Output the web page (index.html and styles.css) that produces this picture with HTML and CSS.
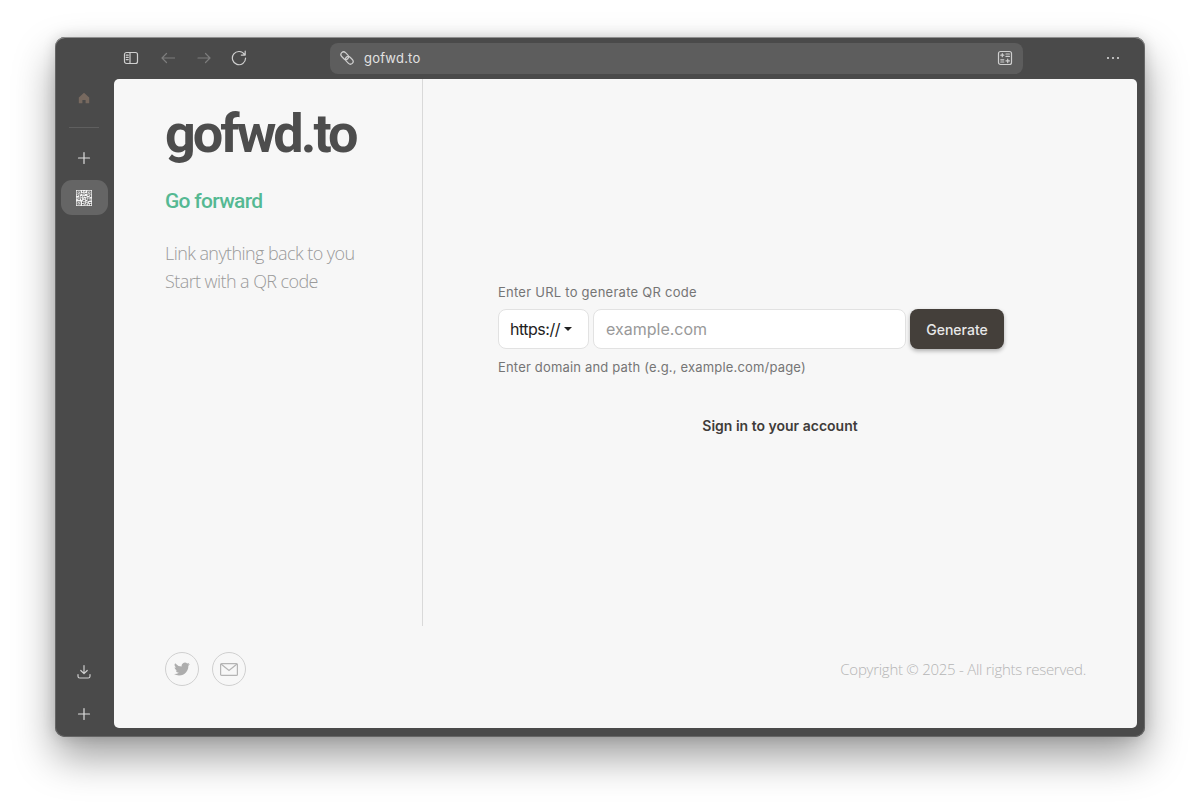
FILE: index.html
```html
<!DOCTYPE html>
<html lang="en">
<head>
    <meta charset="UTF-8">
    <meta name="viewport" content="width=device-width, initial-scale=1.0">
    <title>gofwd.to</title>
    <link rel="stylesheet" href="styles.css">
</head>
<body>
    <div class="window">
        <div class="toolbar">
            <div class="nav">
                <svg class="icon" width="16" height="16" viewBox="0 0 16 16"><rect x="1.5" y="2.5" width="13" height="11" rx="2"/><path d="M7 2.5v11M3.300 5.200h1.900M3.300 7.400h1.900M3.300 9.600h1.900"/></svg>
                <svg class="icon dim" width="16" height="16" viewBox="0 0 16 16"><path d="M15.500 8H3M7.500 3.500 3 8l4.500 4.500"/></svg>
                <svg class="icon dim" width="16" height="16" viewBox="0 0 16 16"><path d="M3 8h12M10.500 3.500 15 8l-4.500 4.500"/></svg>
                <svg class="icon" width="16" height="16" viewBox="0 0 16 16"><path d="M13.600 4.600A6.600 6.600 0 1 0 14.600 8M14.200 1.200v3.900h-3.900"/></svg>
            </div>
            <div class="address">
                <svg class="icon" width="16" height="16" viewBox="0 0 16 16"><g transform="rotate(45 8 8)"><rect x="0.500" y="5.300" width="8.500" height="5.400" rx="2.700"/><rect x="7" y="5.300" width="8.500" height="5.400" rx="2.700"/></g></svg>
                <span class="address-text">gofwd.to</span>
                <svg class="icon address-end" width="16" height="16" viewBox="0 0 16 16"><rect x="1.500" y="1.500" width="13" height="13" rx="2"/><path d="M3.800 5.200h3M5.300 3.700v3M9 4h3.400M9 6.400h3.400M3.800 9.800h3M3.800 12h3M9 10.900h3.400M10.700 9.200v3.400"/></svg>
            </div>
            <div class="more"><span></span><span></span><span></span></div>
        </div>
        <div class="main">
            <div class="sidebar">
                <svg class="home" width="12" height="12" viewBox="0 0 12 12"><path d="M6 .8.8 5.600v5.600h3.600V8h3.200v3.200h3.600V5.600z"/></svg>
                <div class="sidebar-line"></div>
                <svg class="icon plus" width="14" height="14" viewBox="0 0 14 14"><path d="M7 1.500v11M1.500 7h11"/></svg>
                <div class="tab">
                    <svg class="qr" width="16" height="16" viewBox="0 0 21 21">
                        <rect width="21" height="21" fill="#f4f4f4"/>
                        <path fill="#4a4a4a" d="M1 1h5v5H1zM15 1h5v5h-5zM1 15h5v5H1zM8 1h1v2H8zM10 2h2v1h-2zM12 1h1v1h-1zM7 4h2v1H7zM10 4h1v3h-1zM12 4h2v1h-2zM8 6h1v1H8zM1 7h2v1H1zM4 7h1v2H4zM6 8h2v1H6zM9 8h1v2H9zM11 8h3v1h-3zM15 7h2v1h-2zM18 7h2v2h-2zM1 10h1v2H1zM3 10h3v1H3zM7 10h1v3H7zM10 11h2v1h-2zM13 10h1v3h-1zM15 10h3v1h-3zM19 11h1v3h-1zM3 12h2v1H3zM9 13h3v1H9zM15 12h3v2h-3zM8 15h2v2H8zM11 15h1v3h-1zM13 15h3v1h-3zM17 16h3v1h-3zM13 17h2v1h-2zM16 18h1v2h-1zM18 18h2v2h-2zM8 18h2v2H8zM11 19h4v1h-4z"/>
                        <path fill="#f4f4f4" d="M2 2h3v3H2zM16 2h3v3h-3zM2 16h3v3H2z"/>
                        <path fill="#4a4a4a" d="M3 3h1v1H3zM17 3h1v1h-1zM3 17h1v1H3z"/>
                    </svg>
                </div>
                <div class="sidebar-bottom">
                    <svg class="icon" width="16" height="16" viewBox="0 0 16 16"><path d="M8 1.500v8M4.800 6.500 8 9.700l3.200-3.200M2 10.500v1.700A1.800 1.800 0 0 0 3.800 14h8.400a1.800 1.800 0 0 0 1.800-1.800v-1.700"/></svg>
                    <svg class="icon plus" width="14" height="14" viewBox="0 0 14 14"><path d="M7 1.500v11M1.500 7h11"/></svg>
                </div>
            </div>
            <div class="page">
                <div class="content">
                    <div class="intro">
                        <h1>gofwd.to</h1>
                        <h2>Go forward</h2>
                        <p>Link anything back to you<br>Start with a QR code</p>
                    </div>
                    <div class="panel">
                        <form class="qr-form">
                            <label for="url">Enter URL to generate QR code</label>
                            <div class="field-row">
                                <div class="protocol">https://<span class="caret"></span></div>
                                <input type="text" id="url" placeholder="example.com">
                                <button type="button">Generate</button>
                            </div>
                            <div class="hint">Enter domain and path (e.g., example.com/page)</div>
                        </form>
                        <a class="signin" href="#">Sign in to your account</a>
                    </div>
                </div>
                <div class="footer">
                    <div class="social">
                        <a class="social-link" href="#">
                            <svg width="16" height="16" viewBox="0 0 24 24"><path fill="#adadad" d="M23.600 4.600c-.9.400-1.800.600-2.800.800 1-.6 1.800-1.600 2.100-2.700-.9.600-2 1-3.100 1.200A4.900 4.900 0 0 0 11.500 8.300 13.900 13.900 0 0 1 1.700 3.200a4.900 4.900 0 0 0 1.500 6.600c-.8 0-1.600-.2-2.200-.6v.1c0 2.400 1.700 4.400 3.900 4.800-.7.200-1.500.2-2.200.1.600 2 2.400 3.400 4.600 3.400A9.900 9.900 0 0 1 0 19.600 13.900 13.900 0 0 0 7.500 21.800c9.100 0 14-7.500 14-14v-.6c1-.7 1.800-1.600 2.100-2.600z"/></svg>
                        </a>
                        <a class="social-link" href="#">
                            <svg width="18" height="13" viewBox="0 0 18 13" fill="none" stroke="#b4b4b4" stroke-width="1.200"><rect x=".6" y=".6" width="16.800" height="11.800" rx="1"/><path d="M1 1 9 7.500 17 1"/></svg>
                        </a>
                    </div>
                    <div class="copyright">Copyright © 2025 - All rights reserved.</div>
                </div>
            </div>
        </div>
    </div>
</body>
</html>
```

FILE: styles.css
```css
html, body {
    height: 100%;
}

body {
    margin: 0;
    padding: 37px 55px 0;
    box-sizing: border-box;
    background-color: #fff;
    overflow: hidden;
}

.window {
    height: 700px;
    display: flex;
    flex-direction: column;
    background-color: #4a4a4a;
    border-radius: 10px;
    box-sizing: border-box;
    box-shadow: inset 0 1px 0 #8f8f8f, inset 0 0 0 1px #666, 0 20px 40px rgba(0, 0, 0, 0.38), 0 0 14px rgba(0, 0, 0, 0.14);
}

.icon {
    fill: none;
    stroke: #cfcfcf;
    stroke-width: 1.2;
    stroke-linecap: round;
    stroke-linejoin: round;
    flex-shrink: 0;
}

.icon.dim {
    stroke: #7d7d7d;
}

.icon.plus {
    stroke: #dedede;
}

.toolbar {
    height: 42px;
    display: flex;
    align-items: center;
    flex-shrink: 0;
}

.nav {
    width: 275px;
    padding-left: 68px;
    box-sizing: border-box;
    display: flex;
    gap: 20px;
}

.address {
    width: 693px;
    height: 31px;
    display: flex;
    align-items: center;
    gap: 9px;
    padding: 0 10px 0 9px;
    box-sizing: border-box;
    background-color: #5d5d5d;
    border-radius: 8px;
}

.address-text {
    font-family: Inter, sans-serif;
    font-size: 13px;
    letter-spacing: 0.2px;
    color: #e2e2e2;
}

.address-end {
    margin-left: auto;
}

.more {
    margin-left: 84px;
    display: flex;
    gap: 3px;
}

.more span {
    width: 2px;
    height: 2px;
    border-radius: 50%;
    background-color: #e0e0e0;
}

.main {
    flex: 1;
    display: flex;
    min-height: 0;
    padding: 0 8px 9px 0;
}

.sidebar {
    width: 59px;
    flex-shrink: 0;
    display: flex;
    flex-direction: column;
    align-items: center;
    padding: 13px 1px 7px 0;
    box-sizing: border-box;
}

.home {
    fill: #77695f;
}

.sidebar-line {
    width: 30px;
    height: 1px;
    margin: 23px 0 23px;
    background-color: #5f5f5f;
}

.tab {
    width: 47px;
    height: 35px;
    margin-top: 15px;
    display: flex;
    align-items: center;
    justify-content: center;
    background-color: #656565;
    border-radius: 11px;
}

.sidebar-bottom {
    margin-top: auto;
    display: flex;
    flex-direction: column;
    align-items: center;
    gap: 27px;
}

.page {
    flex: 1;
    display: flex;
    flex-direction: column;
    background-color: #f7f7f7;
    border-radius: 5px;
}

.content {
    height: 547px;
    display: flex;
}

.intro {
    width: 309px;
    padding-left: 51px;
    box-sizing: border-box;
    border-right: 1px solid #d9d9d9;
}

.intro h1 {
    margin: 20px 0 0;
    font-family: Roboto, sans-serif;
    font-size: 54px;
    font-weight: 700;
    line-height: 70px;
    letter-spacing: -3px;
    color: #4d4d4d;
}

.intro h2 {
    margin: 17px 0 0;
    font-family: Roboto, sans-serif;
    font-size: 21px;
    font-weight: 500;
    line-height: 30px;
    letter-spacing: -0.7px;
    color: #55b993;
}

.intro p {
    margin: 23px 0 0;
    font-family: "Open Sans", sans-serif;
    font-size: 18px;
    font-weight: 300;
    line-height: 28px;
    letter-spacing: -0.58px;
    color: #9a9a9a;
}

.panel {
    flex: 1;
    padding-top: 204px;
    display: flex;
    flex-direction: column;
    font-family: Inter, sans-serif;
}

.qr-form {
    width: 506px;
    margin-left: 75px;
    display: flex;
    flex-direction: column;
}

label {
    font-size: 13px;
    line-height: 18px;
    letter-spacing: 0.25px;
    color: #757575;
}

.field-row {
    display: flex;
    gap: 4px;
    margin-top: 8px;
}

.protocol {
    width: 91px;
    height: 40px;
    display: flex;
    align-items: center;
    gap: 4px;
    padding-left: 11px;
    box-sizing: border-box;
    background-color: #fff;
    border: 1px solid #e2e2e2;
    border-radius: 8px;
    font-size: 16px;
    letter-spacing: -0.5px;
    color: #222;
}

.caret {
    width: 0;
    height: 0;
    border-left: 4px solid transparent;
    border-right: 4px solid transparent;
    border-top: 4px solid #222;
}

input[type="text"] {
    width: 313px;
    height: 40px;
    padding: 0 12px;
    box-sizing: border-box;
    background-color: #fff;
    border: 1px solid #e2e2e2;
    border-radius: 8px;
    font-family: Inter, sans-serif;
    font-size: 16px;
}

input[type="text"]::placeholder {
    color: #999;
}

button[type="button"] {
    width: 94px;
    height: 40px;
    padding: 0;
    background-color: #443f3a;
    color: #e8e8e8;
    border: none;
    border-radius: 8px;
    font-family: Inter, sans-serif;
    font-size: 14px;
    font-weight: 500;
    box-shadow: 0 2px 4px rgba(0, 0, 0, 0.3);
}

.hint {
    margin-top: 9px;
    font-size: 13px;
    line-height: 18px;
    letter-spacing: 0.18px;
    color: #757575;
}

.signin {
    margin-top: 41px;
    text-align: center;
    font-size: 14px;
    font-weight: 600;
    line-height: 18px;
    color: #3f3c3a;
    text-decoration: none;
}

.footer {
    flex: 1;
    display: flex;
    align-items: center;
    justify-content: space-between;
    padding: 0 51px 16px;
}

.social {
    display: flex;
    gap: 13px;
}

.social-link {
    width: 34px;
    height: 34px;
    display: flex;
    align-items: center;
    justify-content: center;
    box-sizing: border-box;
    border: 1px solid #d0d0d0;
    border-radius: 50%;
}

.copyright {
    font-family: "Open Sans", sans-serif;
    font-size: 15px;
    font-weight: 300;
    letter-spacing: -0.27px;
    color: #b5b5b5;
}
```
